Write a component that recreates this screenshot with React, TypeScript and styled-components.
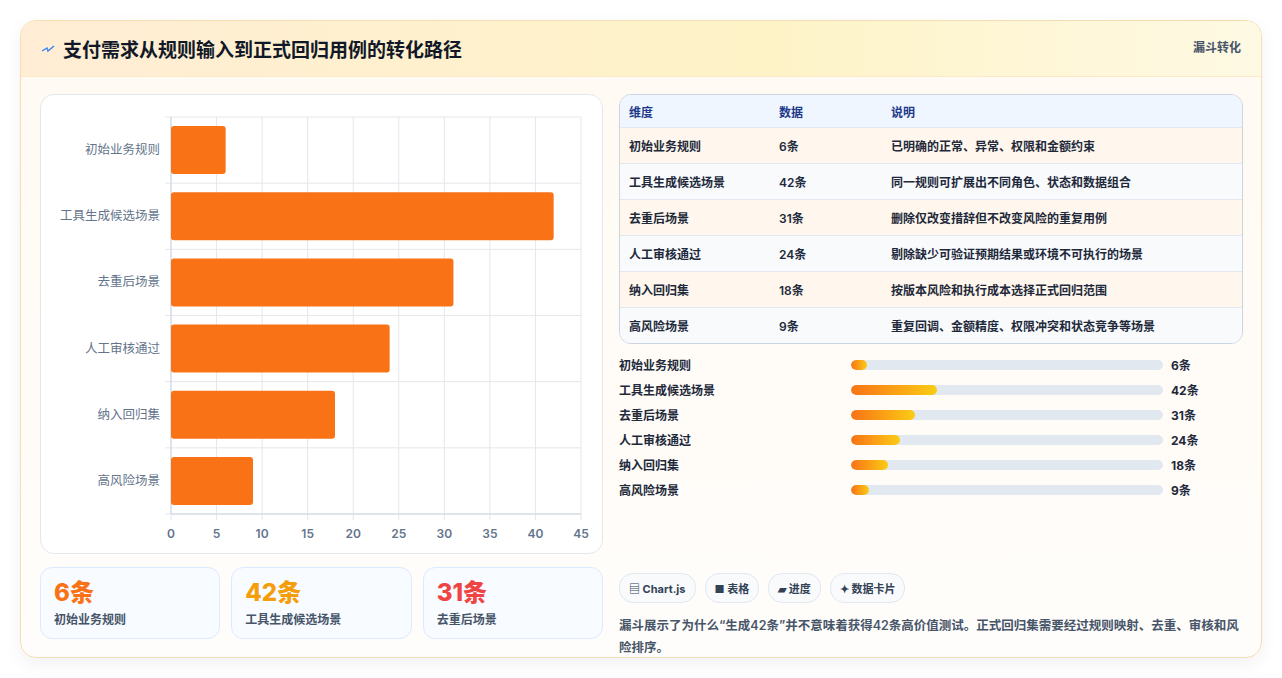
import React from 'react';
import styled, { createGlobalStyle } from 'styled-components';

const GlobalStyle = createGlobalStyle`
  html, body { margin: 0; padding: 0; background: #f5f5f5; }
  body { font-family: Inter, "Noto Sans CJK SC", sans-serif; color: #1e293b; }
`;

const rows = [
  { name: '初始业务规则', value: 6, note: '已明确的正常、异常、权限和金额约束' },
  { name: '工具生成候选场景', value: 42, note: '同一规则可扩展出不同角色、状态和数据组合' },
  { name: '去重后场景', value: 31, note: '删除仅改变措辞但不改变风险的重复用例' },
  { name: '人工审核通过', value: 24, note: '剔除缺少可验证预期结果或环境不可执行的场景' },
  { name: '纳入回归集', value: 18, note: '按版本风险和执行成本选择正式回归范围' },
  { name: '高风险场景', value: 9, note: '重复回调、金额精度、权限冲突和状态竞争等场景' },
];

const Page = styled.div`
  padding: 20px 20px 20px 20px;
  background: #fff;
  height: 678px;
  box-sizing: border-box;
`;

const Card = styled.div`
  border: 1px solid #f5deb3;
  border-radius: 16px;
  overflow: hidden;
  background: linear-gradient(180deg, #fffaf2 0%, #fffdfb 100%);
  box-shadow: 0 6px 18px rgba(0, 0, 0, 0.06);
  height: 638px;
  box-sizing: border-box;
`;

const Header = styled.div`
  height: 55px;
  display: flex;
  align-items: center;
  justify-content: space-between;
  padding: 0 20px 0 20px;
  background: linear-gradient(90deg, #ffedd5 0%, #fef3c7 60%, #fef9e3 100%);
  border-bottom: 1px solid #fde8c8;
`;

const Title = styled.h1`
  margin: 0;
  font-size: 19px;
  font-weight: 700;
  color: #111827;
  display: flex;
  align-items: center;
  gap: 8px;
`;

const Tag = styled.span`
  font-size: 12px;
  font-weight: 700;
  color: #475569;
  align-self: flex-start;
  margin-top: 17px;
`;

const Body = styled.div`
  display: grid;
  grid-template-columns: 563px 624px;
  gap: 16px;
  padding: 17px 18px 0 19px;
`;

const Col = styled.div`
  display: flex;
  flex-direction: column;
`;

const ChartBox = styled.div`
  height: 460px;
  border: 1px solid #e5e7eb;
  border-radius: 14px;
  background: #fff;
  box-sizing: border-box;
`;

const Stats = styled.div`
  display: grid;
  grid-template-columns: repeat(3, 1fr);
  gap: 11px;
  margin-top: 13px;
`;

const Stat = styled.div`
  height: 72px;
  border: 1px solid #dbeafe;
  border-radius: 12px;
  background: #f8fbff;
  padding: 10px 13px;
  box-sizing: border-box;
`;

const StatValue = styled.div<{ $color: string }>`
  font-size: 24px;
  font-weight: 800;
  color: ${(p) => p.$color};
  line-height: 30px;
`;

const StatLabel = styled.div`
  font-size: 12px;
  font-weight: 600;
  color: #475569;
  margin-top: 2px;
`;

const Table = styled.div`
  border: 1px solid #cbd5e1;
  border-radius: 12px;
  overflow: hidden;
`;

const Tr = styled.div<{ $bg: string; $head?: boolean }>`
  display: grid;
  grid-template-columns: 150px 112px 1fr;
  align-items: center;
  height: ${(p) => (p.$head ? 32 : 35)}px;
  padding-left: 9px;
  background: ${(p) => p.$bg};
  border-bottom: 1px solid #e2e8f0;
  font-size: 12px;
  font-weight: 600;
  color: ${(p) => (p.$head ? '#1e3a8a' : '#1e293b')};
  &:last-child { border-bottom: none; }
`;

const Progress = styled.div`
  display: flex;
  flex-direction: column;
  gap: 9px;
  margin-top: 12px;
`;

const PRow = styled.div`
  display: grid;
  grid-template-columns: 232px 320px 1fr;
  align-items: center;
  height: 16px;
  font-size: 12px;
  font-weight: 600;
  color: #1e293b;
`;

const Track = styled.div`
  height: 10px;
  border-radius: 5px;
  background: #e2e8f0;
  overflow: hidden;
  margin-right: 8px;
`;

const Fill = styled.div`
  height: 100%;
  border-radius: 5px;
  background: linear-gradient(90deg, #f97316, #facc15);
`;

const Chips = styled.div`
  display: flex;
  gap: 9px;
  margin-top: 76px;
`;

const Chip = styled.span`
  height: 28px;
  display: inline-flex;
  align-items: center;
  gap: 4px;
  padding: 0 9px;
  border: 1px solid #e2e8f0;
  border-radius: 14px;
  background: #f8fafc;
  font-size: 11px;
  font-weight: 700;
  color: #334155;
`;

const Note = styled.p`
  margin: 12px 0 0;
  font-size: 12.5px;
  line-height: 22px;
  font-weight: 600;
  color: #475569;
`;

const Chart = () => {
  const x0 = 130, x1 = 540, y0 = 22, y1 = 419;
  const rh = (y1 - y0) / 6;
  const sx = (v: number) => x0 + (v / 45) * (x1 - x0);
  return (
    <svg width="561" height="458" fontFamily="Inter, 'Noto Sans CJK SC', sans-serif">
      {Array.from({ length: 10 }, (_, i) => (
        <g key={i}>
          <line x1={sx(i * 5)} x2={sx(i * 5)} y1={y0} y2={y1 + 6} stroke="#e5e7eb" />
          <text x={sx(i * 5)} y={y1 + 24} fontSize="12" fontWeight="600" fill="#64748b" textAnchor="middle">{i * 5}</text>
        </g>
      ))}
      {Array.from({ length: 7 }, (_, i) => (
        <line key={i} x1={x0 - 6} x2={x1} y1={y0 + i * rh} y2={y0 + i * rh} stroke="#e5e7eb" />
      ))}
      <line x1={x0} x2={x0} y1={y0} y2={y1} stroke="#cbd5e1" />
      <line x1={x0} x2={x1} y1={y1} y2={y1} stroke="#cbd5e1" />
      {rows.map((r, i) => {
        const cy = y0 + i * rh + rh / 2;
        return (
          <g key={r.name}>
            <text x={x0 - 11} y={cy + 4} fontSize="12.5" fill="#64748b" textAnchor="end">{r.name}</text>
            <rect x={x0} y={cy - 24} width={sx(r.value) - x0} height={48} rx={3} fill="#f97316" />
          </g>
        );
      })}
    </svg>
  );
};

export default function App() {
  return (
    <Page>
      <GlobalStyle />
      <Card>
        <Header>
          <Title>
            <svg width="14" height="10" viewBox="0 0 14 10">
              <path d="M1 7 L6 4 L7 7 L13 2" stroke="#3b82f6" strokeWidth="1.4" fill="none" />
            </svg>
            支付需求从规则输入到正式回归用例的转化路径
          </Title>
          <Tag>漏斗转化</Tag>
        </Header>
        <Body>
          <Col>
            <ChartBox><Chart /></ChartBox>
            <Stats>
              <Stat><StatValue $color="#f97316">6条</StatValue><StatLabel>初始业务规则</StatLabel></Stat>
              <Stat><StatValue $color="#f59e0b">42条</StatValue><StatLabel>工具生成候选场景</StatLabel></Stat>
              <Stat><StatValue $color="#ef4444">31条</StatValue><StatLabel>去重后场景</StatLabel></Stat>
            </Stats>
          </Col>
          <Col>
            <Table>
              <Tr $head $bg="#eff6ff"><span>维度</span><span>数据</span><span>说明</span></Tr>
              {rows.map((r, i) => (
                <Tr key={r.name} $bg={i % 2 === 0 ? '#fff7ed' : '#f8fafc'}>
                  <span>{r.name}</span><span>{r.value}条</span><span>{r.note}</span>
                </Tr>
              ))}
            </Table>
            <Progress>
              {rows.map((r) => (
                <PRow key={r.name}>
                  <span>{r.name}</span>
                  <Track><Fill style={{ width: `${Math.max(5, (r.value / 152) * 100)}%` }} /></Track>
                  <span style={{ fontWeight: 700 }}>{r.value}条</span>
                </PRow>
              ))}
            </Progress>
            <Chips>
              <Chip>▤ Chart.js</Chip>
              <Chip>■ 表格</Chip>
              <Chip>▰ 进度</Chip>
              <Chip>✦ 数据卡片</Chip>
            </Chips>
            <Note>漏斗展示了为什么“生成42条”并不意味着获得42条高价值测试。正式回归集需要经过规则映射、去重、审核和风险排序。</Note>
          </Col>
        </Body>
      </Card>
    </Page>
  );
}
